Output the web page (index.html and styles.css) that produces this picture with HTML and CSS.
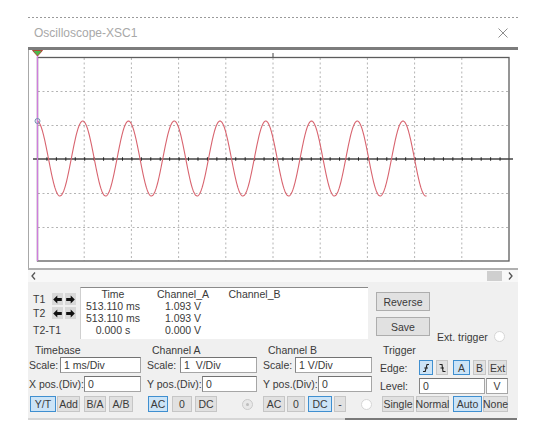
FILE: index.html
```html
<!DOCTYPE html>
<html>
<head>
<meta charset="utf-8">
<title>Oscilloscope-XSC1</title>
<link rel="stylesheet" href="styles.css">
</head>
<body>
<div class="win">
  <div class="dots"></div>
  <div class="title">
    <span>Oscilloscope-XSC1</span>
    <svg class="close" width="10" height="10" viewBox="0 0 10 10"><path d="M0.5 0.5 L9.5 9.5 M9.5 0.5 L0.5 9.5" stroke="#8e8e8e" stroke-width="1" fill="none"/></svg>
  </div>
  <div class="bar"></div>
  <svg class="plot" width="490" height="220" viewBox="0 0 490 220">
    <line x1="0.5" y1="0" x2="0.5" y2="218" stroke="#a8a8a8"/>
    <g stroke="#b4b4b4" stroke-dasharray="2 2.5" stroke-width="1" fill="none">
      <line x1="56.2" y1="8" x2="56.2" y2="211"/>
      <line x1="103.4" y1="8" x2="103.4" y2="211"/>
      <line x1="150.6" y1="8" x2="150.6" y2="211"/>
      <line x1="197.8" y1="8" x2="197.8" y2="211"/>
      <line x1="245" y1="8" x2="245" y2="211"/>
      <line x1="292.2" y1="8" x2="292.2" y2="211"/>
      <line x1="339.4" y1="8" x2="339.4" y2="211"/>
      <line x1="386.6" y1="8" x2="386.6" y2="211"/>
      <line x1="433.8" y1="8" x2="433.8" y2="211"/>
      <line x1="10" y1="41.5" x2="481" y2="41.5"/>
      <line x1="10" y1="75.5" x2="481" y2="75.5"/>
      <line x1="10" y1="143.5" x2="481" y2="143.5"/>
      <line x1="10" y1="177.5" x2="481" y2="177.5"/>
    </g>
    <rect x="9.5" y="7.5" width="471.5" height="203.5" fill="none" stroke="#5c5c5c" stroke-width="1.3"/>
    <line x1="5" y1="109" x2="485" y2="109" stroke="#444" stroke-width="1.3"/>
    <line x1="9" y1="109" x2="481" y2="109" stroke="#222" stroke-width="3.5" stroke-dasharray="1 8.44"/>
    <line x1="245" y1="3" x2="245" y2="7" stroke="#444"/>
    <path id="wave" fill="none" stroke="#d8646f" stroke-width="1.1"/>
    <line x1="9.5" y1="2" x2="9.5" y2="211" stroke="#cf7ddc" stroke-width="1.3"/>
    <path d="M4.5 0.5 H14.5 L9.5 6 Z" fill="#4cb84c" stroke="#b04a3a" stroke-width="1"/>
    <circle cx="9.5" cy="71" r="2.5" fill="none" stroke="#7190b0"/>
    <line x1="0" y1="219" x2="490" y2="219" stroke="#b0b0b0" stroke-width="2"/>
  </svg>
  <div class="scroll">
    <svg class="chev" width="5" height="8" viewBox="0 0 5 8"><path d="M4 0.5 L1 4 L4 7.5" stroke="#555" stroke-width="1.3" fill="none"/></svg>
    <div class="thumb"></div>
    <svg class="chev chev-r" width="5" height="8" viewBox="0 0 5 8"><path d="M1 0.5 L4 4 L1 7.5" stroke="#555" stroke-width="1.3" fill="none"/></svg>
  </div>
  <div class="panel">
    <div class="row1">
      <div class="tcol">
        <div class="trow"><span class="tl">T1</span>
          <span class="ab"><svg width="9" height="9" viewBox="0 0 9 9"><path d="M0.2 4.5 L4.3 0.4 V3 H8.8 V6 H4.3 V8.6 Z" fill="#111"/></svg></span>
          <span class="ab"><svg width="9" height="9" viewBox="0 0 9 9"><path d="M8.8 4.5 L4.7 0.4 V3 H0.2 V6 H4.7 V8.6 Z" fill="#111"/></svg></span>
        </div>
        <div class="trow"><span class="tl">T2</span>
          <span class="ab"><svg width="9" height="9" viewBox="0 0 9 9"><path d="M0.2 4.5 L4.3 0.4 V3 H8.8 V6 H4.3 V8.6 Z" fill="#111"/></svg></span>
          <span class="ab"><svg width="9" height="9" viewBox="0 0 9 9"><path d="M8.8 4.5 L4.7 0.4 V3 H0.2 V6 H4.7 V8.6 Z" fill="#111"/></svg></span>
        </div>
        <div class="tdiff">T2-T1</div>
      </div>
      <div class="table">
        <div class="tr"><span class="c1">Time</span><span class="c2">Channel_A</span><span class="c3">Channel_B</span></div>
        <div class="tr"><span class="c1">513.110 ms</span><span class="c2">1.093 V</span><span class="c3"></span></div>
        <div class="tr"><span class="c1">513.110 ms</span><span class="c2">1.093 V</span><span class="c3"></span></div>
        <div class="tr"><span class="c1">0.000 s</span><span class="c2">0.000 V</span><span class="c3"></span></div>
      </div>
      <div class="btns">
        <div class="btn big">Reverse</div>
        <div class="btn big">Save</div>
      </div>
      <div class="ext"><span>Ext. trigger</span><span class="radio ext-radio"></span></div>
    </div>
    <div class="row2">
      <div class="grp g-tb">
        <div class="glabel">Timebase</div>
        <div class="frow"><span class="l1">Scale:</span><div class="inp">1 ms/Div</div></div>
        <div class="frow r2"><span class="l2">X pos.(Div):</span><div class="inp">0</div></div>
        <div class="brow">
          <div class="btn on ml1 w26">Y/T</div>
          <div class="btn ml1 w23">Add</div>
          <div class="btn ml4 w22">B/A</div>
          <div class="btn ml3 w24">A/B</div>
        </div>
      </div>
      <div class="grp g-ca">
        <div class="glabel">Channel A</div>
        <div class="frow"><span class="l1">Scale:</span><div class="inp">1&nbsp;&nbsp;V/Div</div></div>
        <div class="frow r2"><span class="l2">Y pos.(Div):</span><div class="inp">0</div></div>
        <div class="brow">
          <div class="btn on ml1 w20">AC</div>
          <div class="btn ml4 w20">0</div>
          <div class="btn ml3 w22">DC</div>
          <span class="radio dis ml25"></span>
        </div>
      </div>
      <div class="grp g-cb">
        <div class="glabel">Channel B</div>
        <div class="frow"><span class="l1">Scale:</span><div class="inp">1 V/Div</div></div>
        <div class="frow r2"><span class="l2">Y pos.(Div):</span><div class="inp">0</div></div>
        <div class="brow">
          <div class="btn w22">AC</div>
          <div class="btn ml2 w18">0</div>
          <div class="btn on ml3 w24">DC</div>
          <div class="btn ml2 w12">-</div>
          <span class="radio ml15"></span>
        </div>
      </div>
      <div class="grp g-tr">
        <div class="glabel">Trigger</div>
        <div class="erow"><span class="l1">Edge:</span>
          <div class="btn on ebtn w14"><svg width="10" height="10" viewBox="0 0 10 10"><path d="M8 1.5 H6 L4.2 8.5 H2 M3.3 5 H7" stroke="#222" stroke-width="1.1" fill="none"/></svg></div>
          <div class="btn ebtn ml3 w12"><svg width="9" height="10" viewBox="0 0 9 10"><path d="M1.5 1.5 H4 L5 8.5 H7.5 M2.5 5 H6" stroke="#222" stroke-width="1.1" fill="none"/></svg></div>
          <div class="btn on ebtn ml5 w17">A</div>
          <div class="btn ebtn ml3 w13">B</div>
          <div class="btn ebtn ml2 w19">Ext</div>
        </div>
        <div class="lrow"><span class="l1">Level:</span><div class="inp lvl">0</div><div class="vbox">V</div></div>
        <div class="brow tb">
          <div class="btn ml2 w32">Single</div>
          <div class="btn ml2 w33">Normal</div>
          <div class="btn on ml4 w29">Auto</div>
          <div class="btn ml1 w25">None</div>
        </div>
      </div>
    </div>
  </div>
  <div class="bottomline"></div>
</div>
<script src="script.js"></script>
</body>
</html>
```

FILE: styles.css
```css
* { box-sizing: border-box; }
html, body { margin: 0; background: #fff; }
body { font-family: "Liberation Sans", Arial, sans-serif; font-size: 10.5px; color: #3a3a3a; }

.win { margin-left: 28px; width: 490px; padding-top: 17px; }
.dots { height: 1px; background: repeating-linear-gradient(90deg, #9a9a9a 0 2px, transparent 2px 4px); }
.title { height: 29px; display: flex; align-items: center; justify-content: space-between; padding: 0 10px 0 6px; font-size: 12px; color: #a8a8a8; }
.close { display: block; }
.bar { height: 3px; background: #7c7c7c; }
.plot { display: block; }

.scroll { height: 12px; display: flex; align-items: center; padding: 0 5px 0 3px; background: #f8f8f8; }
.chev { display: block; }
.thumb { margin-left: auto; width: 15px; height: 10px; background: #cfcfcf; }
.chev-r { margin-left: 6px; }

.panel { background: #f0f0f0; }
.row1 { height: 61px; display: flex; }
.tcol { width: 52px; padding: 11px 0 0 5px; }
.trow { display: flex; align-items: center; height: 12px; }
.trow + .trow { margin-top: 2px; }
.tl { width: 19px; }
.ab { width: 11px; height: 12px; background: #d8d8d8; display: flex; align-items: center; justify-content: center; }
.ab + .ab { margin-left: 2px; }
.ab svg { display: block; }
.tdiff { margin-top: 5px; line-height: 12px; }

.table { width: 288px; height: 52px; margin-top: 5px; background: #fff; border-top: 1px solid #8a8a8a; border-left: 1px solid #cfcfcf; }
.tr { display: flex; height: 12px; line-height: 12px; }
.c1 { width: 64px; text-align: center; }
.c2 { width: 76px; text-align: center; }
.c3 { width: 67px; text-align: center; }

.btn { background: #e1e1e1; border: 1px solid #c6c6c6; display: flex; align-items: center; justify-content: center; color: #3a3a3a; height: 16px; flex: none; white-space: nowrap; }
.btn.on { background: #cce4f7; border-color: #3f8fd0; }
.btns { margin-left: 8px; padding-top: 10px; width: 54px; }
.big { height: 19px; border-color: #adadad; }
.big + .big { margin-top: 6px; }

.ext { margin-left: 7px; align-self: flex-end; display: flex; align-items: center; height: 13px; }
.radio { width: 11px; height: 11px; border-radius: 50%; border: 1px solid #d6d6d6; background: #fff; flex: none; position: relative; }
.ext-radio { margin-left: 6px; }
.radio.dis { background: #e8e8e8; border-color: #cacaca; }
.radio.dis::after { content: ""; position: absolute; left: 3px; top: 3px; width: 3px; height: 3px; border-radius: 50%; background: #bdbdbd; }

.row2 { display: flex; height: 75px; }
.grp { display: flex; flex-direction: column; }
.g-tb { width: 118px; padding: 0 5px 0 1px; }
.g-ca { width: 116px; padding: 0 5px 0 1px; }
.g-cb { width: 116px; padding: 0 6px 0 1px; }
.g-tr { width: 140px; padding: 0 0 0 2px; }
.glabel { height: 14px; line-height: 14px; }
.g-tb .glabel { padding-left: 6px; }
.g-ca .glabel { padding-left: 5px; }
.g-cb .glabel { padding-left: 5px; }
.g-tr .glabel { padding-left: 3px; }

.frow { display: flex; align-items: center; height: 16px; }
.frow.r2 { margin-top: 3px; }
.brow { display: flex; align-items: center; height: 16px; margin-top: 4px; }
.brow.tb { margin-top: 2px; }
.erow { display: flex; align-items: center; height: 15px; margin-top: 3px; }
.lrow { display: flex; align-items: center; height: 16px; margin-top: 3px; }
.ebtn { height: 15px; }
.ebtn svg { display: block; }

.inp { flex: 1; height: 16px; background: #fff; border: 1px solid #a6a6a6; border-top-color: #727272; border-left-color: #858585; padding-left: 3px; line-height: 14px; white-space: nowrap; }
.inp.lvl { flex: none; width: 66px; }
.vbox { width: 22px; height: 16px; margin-left: 1px; background: #fff; border: 1px solid #a6a6a6; border-top-color: #727272; text-align: center; line-height: 14px; }

.l1, .l2 { flex: none; white-space: nowrap; }
.g-tb .l1 { width: 31px; }
.g-tb .l2 { width: 55px; }
.g-ca .l1 { width: 33px; }
.g-ca .l2 { width: 55px; }
.g-cb .l1 { width: 32px; }
.g-cb .l2 { width: 55px; }
.g-tr .l1 { width: 39px; }

.ml1 { margin-left: 1px; }
.ml2 { margin-left: 2px; }
.ml3 { margin-left: 3px; }
.ml4 { margin-left: 4px; }
.ml5 { margin-left: 5px; }
.ml15 { margin-left: 15px; }
.ml25 { margin-left: 25px; }
.w12 { width: 12px; }
.w13 { width: 13px; }
.w14 { width: 14px; }
.w17 { width: 17px; }
.w18 { width: 18px; }
.w19 { width: 19px; }
.w20 { width: 20px; }
.w22 { width: 22px; }
.w23 { width: 23px; }
.w24 { width: 24px; }
.w25 { width: 25px; }
.w26 { width: 26px; }
.w29 { width: 29px; }
.w32 { width: 32px; }
.w33 { width: 33px; }

.bottomline { height: 2px; background: linear-gradient(90deg, #d6d6d6 0 317px, #7a7a7a 317px 489px, transparent 489px); }
```

FILE: script.js
```js
(function () {
  var p = document.getElementById('wave');
  var x0 = 9, x1 = 398.5, cy = 108.5, A = 37.5, P = 45.75;
  var d = '';
  for (var x = x0; x <= x1 + 0.001; x += 0.5) {
    var y = cy - A * Math.cos(2 * Math.PI * (x - x0) / P);
    d += (d ? 'L' : 'M') + x.toFixed(2) + ' ' + y.toFixed(2) + ' ';
  }
  p.setAttribute('d', d);
})();
```
